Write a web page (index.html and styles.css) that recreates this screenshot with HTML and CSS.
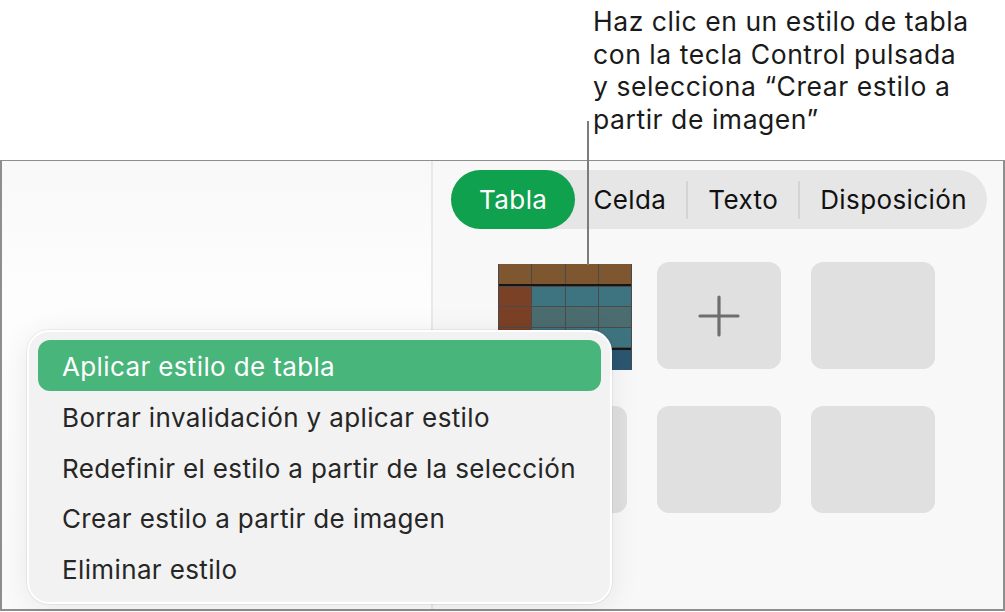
FILE: index.html
```html
<!DOCTYPE html>
<html lang="es">
  <head>
    <meta charset="UTF-8" />
    <meta name="viewport" content="width=device-width, initial-scale=1.0" />
    <title>Estilos de tabla</title>
    <link rel="stylesheet" href="styles.css">
  </head>

  <body>
    <div class="callout">
      Haz clic en un estilo de tabla<br />
      con la tecla Control pulsada<br />
      y selecciona “Crear estilo a<br />
      partir de imagen”
    </div>
    <div class="callout-line"></div>

    <div class="window">
      <div class="sidebar"></div>

      <div class="inspector">
        <div class="tabs">
          <div class="tab active">Tabla</div>
          <div class="tab">Celda</div>
          <div class="sep"></div>
          <div class="tab">Texto</div>
          <div class="sep"></div>
          <div class="tab">Disposición</div>
        </div>

        <div class="styles-grid">
          <div class="thumb">
            <div class="t-row head">
              <span></span><span></span><span></span><span></span>
            </div>
            <div class="t-row">
              <span class="first"></span><span></span><span></span><span></span>
            </div>
            <div class="t-row alt">
              <span class="first"></span><span></span><span></span><span></span>
            </div>
            <div class="t-row">
              <span class="first"></span><span></span><span></span><span></span>
            </div>
            <div class="t-row foot">
              <span class="first"></span><span></span><span></span><span></span>
            </div>
          </div>
          <div class="tile add">
            <svg width="42" height="42" viewBox="0 0 42 42">
              <path d="M21 2v38M2 21h38" stroke="#6e6e6e" stroke-width="3.2" stroke-linecap="round" fill="none" />
            </svg>
          </div>
          <div class="tile"></div>
          <div class="tile"></div>
          <div class="tile"></div>
          <div class="tile"></div>
        </div>
      </div>
    </div>

    <div class="menu">
      <div class="item selected">Aplicar estilo de tabla</div>
      <div class="item">Borrar invalidación y aplicar estilo</div>
      <div class="item">Redefinir el estilo a partir de la selección</div>
      <div class="item">Crear estilo a partir de imagen</div>
      <div class="item">Eliminar estilo</div>
    </div>
  </body>
</html>
```

FILE: styles.css
```css
* {
  margin: 0;
  padding: 0;
  box-sizing: border-box;
}

body {
  font-family: "Inter", "Helvetica Neue", Arial, sans-serif;
  background: #fff;
  width: 1005px;
  height: 612px;
  position: relative;
  overflow: hidden;
  color: #1d1d1f;
}

.callout {
  margin-left: 593px;
  padding-top: 5px;
  height: 160px;
  font-size: 26.5px;
  letter-spacing: 0.55px;
  line-height: 32.5px;
  color: #1a1a1a;
}

.callout-line {
  position: absolute;
  left: 587px;
  top: 121px;
  width: 2px;
  height: 144px;
  background: #7c7c7c;
  z-index: 3;
}

.window {
  display: flex;
  width: 1005px;
  height: 451px;
  border: 2px solid #8e8e8e;
  border-top-width: 1px;
  background: #fafafa;
}

.sidebar {
  width: 431px;
  background: linear-gradient(180deg, #f8f8f8 0%, #fdfdfd 30%, #fafafa 100%);
  border-right: 2px solid #e9e9e9;
}

.inspector {
  flex: 1;
  background: #f8f8f8;
  padding: 9px 0 0 18px;
}

.tabs {
  display: flex;
  align-items: center;
  width: 536px;
  height: 59px;
  border-radius: 30px;
  background: #e6e6e6;
  font-size: 26px;
  letter-spacing: 0.4px;
}

.tab {
  padding: 0 20px;
  color: #111;
}

.tab.active {
  background: #0fa14e;
  color: #fff;
  height: 59px;
  line-height: 59px;
  width: 126px;
  text-align: center;
  border-radius: 30px;
  padding: 0;
  margin-right: -2px;
}

.sep {
  width: 2px;
  height: 38px;
  background: #d4d4d4;
}

.styles-grid {
  display: grid;
  grid-template-columns: repeat(3, 124px);
  grid-auto-rows: 107px;
  column-gap: 30px;
  row-gap: 37px;
  margin: 33px 0 0 52px;
}

.tile {
  background: #e0e0e0;
  border-radius: 12px;
}

.tile.add {
  display: flex;
  align-items: center;
  justify-content: center;
}

.thumb {
  margin: 2px -5px -1px;
  display: flex;
  flex-direction: column;
  background: #4a4a4a;
  gap: 1px;
  padding: 0 1px;
}

.t-row {
  flex: 1;
  display: flex;
  gap: 1px;
}

.t-row span {
  flex: 1;
  background: #3e7480;
}

.t-row .first {
  background: #7b4126;
}

.t-row.head span {
  background: #7e5630;
}

.t-row.head {
  border-bottom: 2px solid #161616;
}

.t-row.alt span {
  background: #4b6d6f;
}

.t-row.alt .first {
  background: #7b4126;
}

.t-row.foot {
  border-top: 2px solid #161616;
}

.t-row.foot span {
  background: #2b5671;
}

.menu {
  position: absolute;
  left: 27px;
  top: 330px;
  width: 585px;
  height: 274px;
  padding: 8px 9px;
  background: #f2f2f2;
  border: 2px solid #fff;
  border-radius: 22px;
  box-shadow: 0 0 0 1px rgba(0, 0, 0, 0.05), 0 4px 30px rgba(0, 0, 0, 0.08);
  z-index: 4;
}

.item {
  height: 50.8px;
  line-height: 50px;
  padding: 2px 0 0 24px;
  font-size: 26px;
  letter-spacing: 0.37px;
  color: #262626;
  border-radius: 12px;
}

.item.selected {
  background: #48b57b;
  color: #fff;
}
```
